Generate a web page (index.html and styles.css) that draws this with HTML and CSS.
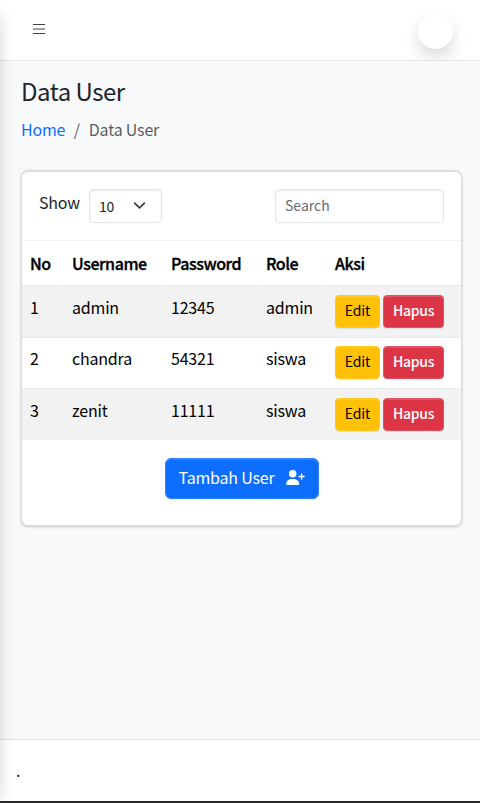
FILE: index.html
```html
<!DOCTYPE html>
<html lang="id">
<head>
<meta charset="utf-8">
<meta name="viewport" content="width=device-width, initial-scale=1">
<title>Data User</title>
<link rel="stylesheet" href="styles.css">
</head>
<body>
<div class="app">
  <header class="topbar">
    <button class="menu" aria-label="Menu"><svg viewBox="0 0 16 16" width="18" height="18"><path fill-rule="evenodd" d="M2.5 12a.5.5 0 0 1 .5-.5h10a.5.5 0 0 1 0 1H3a.5.5 0 0 1-.5-.5m0-4a.5.5 0 0 1 .5-.5h10a.5.5 0 0 1 0 1H3a.5.5 0 0 1-.5-.5m0-4a.5.5 0 0 1 .5-.5h10a.5.5 0 0 1 0 1H3a.5.5 0 0 1-.5-.5"/></svg></button>
    <div class="avatar"></div>
  </header>
  <main class="content">
    <h1>Data User</h1>
    <nav class="crumbs"><a href="#">Home</a><span class="sep">/</span><span>Data User</span></nav>
    <section class="card">
      <div class="tools">
        <span class="show">Show</span>
        <div class="select">10<svg viewBox="0 0 16 16" width="13" height="13"><path fill="none" stroke="#343a40" stroke-linecap="round" stroke-linejoin="round" stroke-width="2" d="m2 5 6 6 6-6"/></svg></div>
        <input class="search" type="text" placeholder="Search">
      </div>
      <table>
        <colgroup><col class="c-no"><col class="c-name"><col class="c-pass"><col class="c-role"><col></colgroup>
        <thead><tr><th>No</th><th>Username</th><th>Password</th><th>Role</th><th>Aksi</th></tr></thead>
        <tbody>
          <tr class="odd"><td>1</td><td>admin</td><td>12345</td><td>admin</td><td><div class="actions"><button class="btn edit">Edit</button><button class="btn delete">Hapus</button></div></td></tr>
          <tr class="even"><td>2</td><td>chandra</td><td>54321</td><td>siswa</td><td><div class="actions"><button class="btn edit">Edit</button><button class="btn delete">Hapus</button></div></td></tr>
          <tr class="odd"><td>3</td><td>zenit</td><td>11111</td><td>siswa</td><td><div class="actions"><button class="btn edit">Edit</button><button class="btn delete">Hapus</button></div></td></tr>
        </tbody>
      </table>
      <div class="bottom">
        <button class="btn add">Tambah User<svg viewBox="0 0 640 512" width="19" height="15"><path d="M96 128a128 128 0 1 1 256 0A128 128 0 1 1 96 128zM0 482.300C0 383.800 79.800 304 178.300 304l91.400 0C368.200 304 448 383.800 448 482.300c0 16.400-13.300 29.700-29.700 29.700L29.700 512C13.300 512 0 498.700 0 482.300zM504 312l0-64-64 0c-13.300 0-24-10.700-24-24s10.700-24 24-24l64 0 0-64c0-13.300 10.700-24 24-24s24 10.700 24 24l0 64 64 0c13.300 0 24 10.700 24 24s-10.700 24-24 24l-64 0 0 64c0 13.300-10.700 24-24 24s-24-10.700-24-24z"/></svg></button>
      </div>
    </section>
  </main>
  <footer>.</footer>
</div>
<div class="edge-shadow"></div>
</body>
</html>
```

FILE: styles.css
```css
* { box-sizing: border-box; }
body {
  margin: 0;
  overflow: hidden;
  background: #f8f9fa;
  color: #212529;
  font: 16px/24px "Noto Sans CJK JP", "Noto Sans", sans-serif;
  letter-spacing: -.2px;
}
button, input { font: inherit; letter-spacing: inherit; }
.app { height: 803px; display: flex; flex-direction: column; }
.topbar {
  height: 61px;
  flex: none;
  display: flex;
  justify-content: space-between;
  padding: 14px 27px 0 30px;
  background: #fff;
  border-bottom: 1px solid #e6e9ec;
}
.menu { width: 18px; height: 30px; padding: 0; border: 0; background: none; }
.menu svg { display: block; fill: #444; }
.avatar {
  width: 35px;
  height: 35px;
  border-radius: 50%;
  background: #fff;
  box-shadow: 0 8px 16px rgba(0, 0, 0, .15);
}
.content { flex: 1; padding: 15px 18px 0 21px; background: #f8f9fb; }
h1 { margin: 0; font-size: 24px; font-weight: 400; line-height: 30px; letter-spacing: -.5px; }
.crumbs { display: flex; margin-top: 11px; color: rgba(33, 37, 41, .75); }
.crumbs a { color: #0d6efd; text-decoration: none; }
.sep { margin: 0 9px 0 8.5px; }
.card {
  height: 356px;
  margin-top: 29px;
  background: #fff;
  border: 1px solid #dcdcdc;
  border-top-width: 2px;
  border-radius: 7px;
  box-shadow: 0 1px 3px rgba(0, 0, 0, .2);
}
.tools { display: flex; height: 68px; padding: 17px 17px 0 17px; }
.show { width: 50px; line-height: 26px; }
.select, .search {
  height: 34px;
  border: 1px solid #e3e5e8;
  border-radius: 4px;
  background: #fff;
  font-size: 14px;
  box-shadow: inset 0 1px 2px rgba(0, 0, 0, .075);
}
.select { display: flex; align-items: center; justify-content: space-between; width: 73px; padding: 0 15px 1px 9px; }
.search { width: 169px; margin-left: auto; padding: 0 9px 2px; color: #212529; outline: 0; letter-spacing: 0; }
.search::placeholder { color: #656b71; opacity: 1; }
table { width: 100%; table-layout: fixed; border-collapse: separate; border-spacing: 0; color: #000; }
.c-no { width: 42px; }
.c-name { width: 99px; }
.c-pass { width: 95px; }
.c-role { width: 69px; }
th, td { padding: 9px 0 0 8px; text-align: left; vertical-align: top; white-space: nowrap; }
th { height: 45px; padding-top: 10px; font-weight: 500; letter-spacing: -.45px; -webkit-text-stroke: .35px #000; border-top: 1px solid #f1f1f1; }
td { height: 51px; border-top: 1px solid #e9eaeb; }
.odd td { height: 52px; background: #f2f2f2; border-right: 1px solid #f5f5f5; }
.odd td:last-child { border-right: 0; }
.even td { padding-top: 8px; }
.actions { display: flex; gap: 3px; }
.btn { display: flex; align-items: center; justify-content: center; border: 1px solid; white-space: nowrap; box-shadow: inset 0 1px 0 rgba(255, 255, 255, .15), 0 1px 1px rgba(0, 0, 0, .075); }
.actions .btn { height: 33px; padding: 0 0 3px; border-radius: 4px; font-size: 14px; letter-spacing: -.1px; }
.btn.edit { width: 45px; color: #000; background: #ffc107; border-color: #ffc720; }
.btn.delete { width: 61px; color: #fff; background: #dc3545; border-color: #e15361; font-weight: 500; letter-spacing: -.3px; }
.bottom { display: flex; justify-content: center; padding-top: 18px; }
.btn.add { width: 154px; height: 41px; gap: 12px; padding: 0 0 3px 1px; border-radius: 6px; color: #fff; background: #0d6efd; border-color: #3182fc; }
.add svg { fill: #fff; }
footer { height: 64px; flex: none; padding: 18px 16px 0; background: #fff; border-top: 1px solid #e3e6e9; border-bottom: 2px solid #252729; }
.edge-shadow {
  position: absolute;
  left: -20px;
  top: 16px;
  width: 20px;
  height: 785px;
  box-shadow: 0 0 16px rgba(0, 0, 0, .16);
}
```
